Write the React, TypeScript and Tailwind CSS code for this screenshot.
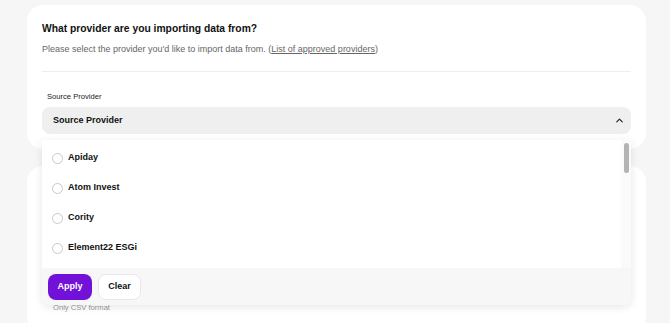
import { ChevronUp } from 'lucide-react';

const providers = ['Apiday', 'Atom Invest', 'Cority', 'Element22 ESGi'];

export default function App() {
  return (
    <div className="min-h-screen bg-[#f6f6f6] px-[27px] pt-[5px] pr-[24px] font-['Liberation_Sans',Arial,sans-serif] text-[#111] overflow-hidden h-[323px]">
      {/* Provider card */}
      <section className="bg-white rounded-[16px] px-[15px] pt-[17px] pb-[15px]">
        <h1 className="text-[10.3px] font-bold leading-[14px]">What provider are you importing data from?</h1>
        <p className="mt-[7px] text-[9px] leading-[12px] text-[#666]">
          Please select the provider you'd like to import data from. (
          <a href="#" className="underline">List of approved providers</a>)
        </p>
        <div className="mt-[16px] border-t border-[#eeeeee]" />

        <div className="relative mt-[20px]">
          <label className="block pl-[5px] text-[7.6px] leading-[10px] text-[#222]">Source Provider</label>
          <button className="mt-[5px] w-full h-[27px] rounded-[8px] bg-[#efefef] flex items-center justify-between pl-[11px] pr-[6px]">
            <span className="text-[9px] font-bold">Source Provider</span>
            <ChevronUp size={11} strokeWidth={2.6} className="text-[#222]" />
          </button>

          {/* Dropdown */}
          <div className="absolute left-0 right-0 top-full mt-[6px] z-10 bg-white rounded-b-[8px] shadow-[0_2px_8px_rgba(0,0,0,0.10)] overflow-hidden">
            <div className="flex h-[128px]">
              <ul className="flex-1 pt-[3px]">
                {providers.map((p) => (
                  <li key={p} className="h-[30px] flex items-center gap-[5px] pl-[10px]">
                    <span className="w-[11px] h-[11px] rounded-full border border-[#c8c8c8] bg-white" />
                    <span className="text-[9px] font-bold">{p}</span>
                  </li>
                ))}
              </ul>
              <div className="w-[10px] bg-[#fafafa] pt-[3px] flex justify-center">
                <div className="w-[5px] h-[30px] rounded-full bg-[#b3b3b3]" />
              </div>
            </div>
            <div className="h-[37px] bg-[#f7f7f7] flex items-center gap-[6px] px-[6px]">
              <button className="h-[26px] w-[44px] rounded-[8px] bg-[#7212d9] text-white text-[9px] font-bold">Apply</button>
              <button className="h-[26px] w-[43px] rounded-[8px] bg-white border border-[#e8e8e8] text-[9px] font-bold">Clear</button>
            </div>
          </div>
        </div>
      </section>

      {/* Upload card (mostly covered by the open dropdown) */}
      <section className="mt-[17px] bg-white rounded-[16px] px-[15px] pt-[137px] pb-[20px]">
        <p className="pl-[11px] text-[7.6px] leading-[10px] text-[#999]">Only CSV format</p>
      </section>
    </div>
  );
}
